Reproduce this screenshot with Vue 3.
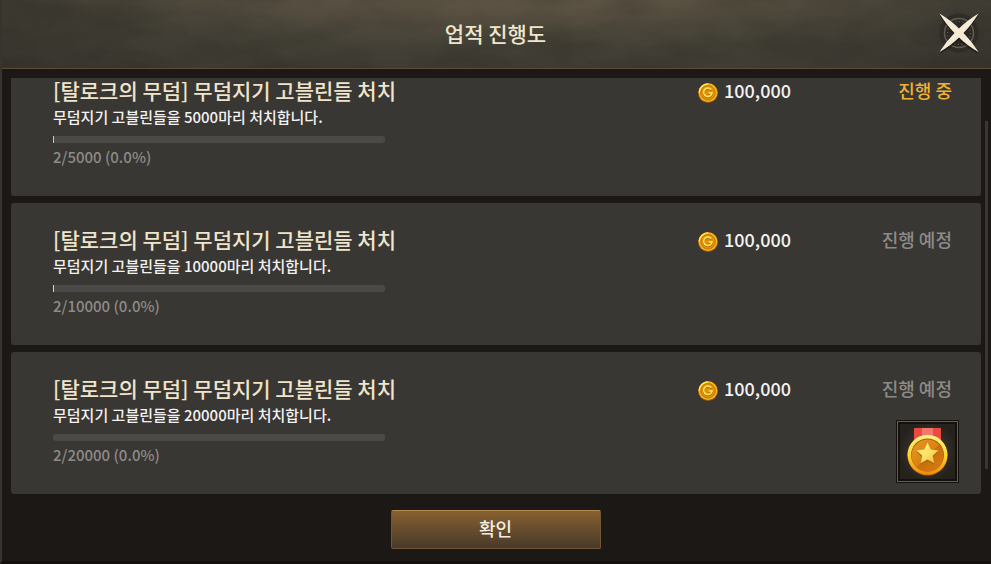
<script setup>
const achievements = [
  { id: 1, title: '[탈로크의 무덤] 무덤지기 고블린들 처치', current: 2, goal: 5000, reward: '100,000', state: '진행 중', active: true, started: true, medal: false },
  { id: 2, title: '[탈로크의 무덤] 무덤지기 고블린들 처치', current: 2, goal: 10000, reward: '100,000', state: '진행 예정', active: false, started: true, medal: false },
  { id: 3, title: '[탈로크의 무덤] 무덤지기 고블린들 처치', current: 2, goal: 20000, reward: '100,000', state: '진행 예정', active: false, started: false, medal: true },
]
const percent = (a) => ((a.current / a.goal) * 100).toFixed(1)
</script>

<template>
  <main class="dialog">
    <header class="header">
      <svg class="texture" aria-hidden="true">
        <filter id="stone" x="0" y="0" width="100%" height="100%">
          <feTurbulence type="fractalNoise" baseFrequency="0.014 0.035" numOctaves="4" seed="8" />
          <feColorMatrix values="0 0 0 0 0  0 0 0 0 0  0 0 0 0 0  1.2 0 0 0 -0.4" />
        </filter>
        <rect width="100%" height="100%" filter="url(#stone)" />
      </svg>
      <h1 class="heading">업적 진행도</h1>
      <button class="close" type="button" aria-label="닫기">
        <svg viewBox="0 0 42 42" width="42" height="42" aria-hidden="true">
          <circle cx="21" cy="21" r="19.5" fill="#2b2a25" opacity=".75" />
          <circle cx="21" cy="21" r="14.5" fill="#2a2823" stroke="#625d50" stroke-width="1.5" />
          <circle cx="21" cy="21" r="11.5" fill="none" stroke="#6b6557" stroke-width="1.2" stroke-dasharray="1 2.6" />
          <path d="M1.500 3.500Q13 10 21 19 29 10 40.500 3.500 33 15 25 23 33 31 40.500 42 29 36 21 28 13 36 1.500 42 9 31 17 23 9 15 1.500 3.500Z" fill="#15130f" opacity=".6" />
          <path d="M1.500 1.500Q13 8.500 21 16.500 29 8.500 40.500 1.500 33.500 13 25.500 21 33.500 29 40.500 40 29 33.500 21 25.500 13 33.500 1.500 40 8.500 29 16.500 21 8.500 13 1.500 1.500Z" fill="#f5ead6" />
        </svg>
      </button>
    </header>

    <div class="body">
      <ul class="list">
        <li v-for="a in achievements" :key="a.id" class="card">
          <div class="info">
            <h2 class="title">{{ a.title }}</h2>
            <p class="desc">무덤지기 고블린들을 {{ a.goal }}마리 처치합니다.</p>
            <div class="bar" role="progressbar" :aria-valuenow="a.current" :aria-valuemax="a.goal" aria-label="진행도">
              <div v-if="a.started" class="fill" :class="{ gold: a.active }" :style="{ width: (a.current / a.goal) * 100 + '%' }"></div>
            </div>
            <p class="count">{{ a.current }}/{{ a.goal }} ({{ percent(a) }}%)</p>
          </div>
          <div class="reward">
            <svg class="coin" viewBox="0 0 20 20" width="20" height="20" aria-hidden="true">
              <circle cx="10" cy="10" r="10" fill="#a9570c" />
              <circle cx="10" cy="9.600" r="9.400" fill="#f5b81c" />
              <path d="M1.200 9.500A8.800 8.800 0 0 1 10 .8" fill="none" stroke="#fff45c" stroke-width="1.300" />
              <circle cx="10" cy="9.800" r="7.300" fill="#e0920e" stroke="#b96a08" stroke-width=".8" />
              <path d="M13.200 7.500A4.200 4.200 0 1 0 14 10.800H10.500" fill="none" stroke="#a85405" stroke-width="1.800" />
              <path d="M13.200 6.800A4.200 4.200 0 1 0 14 10H10.500" fill="none" stroke="#ffe750" stroke-width="1.700" />
            </svg>
            <span>{{ a.reward }}</span>
          </div>
          <div class="side">
            <span class="state" :class="{ active: a.active }">{{ a.state }}</span>
            <div v-if="a.medal" class="medal">
              <svg viewBox="0 0 55 55" width="55" height="55" role="img" aria-label="메달">
                <defs>
                  <linearGradient id="rim" x1="0" y1="0" x2="0" y2="1">
                    <stop offset="0" stop-color="#fff28a" />
                    <stop offset=".5" stop-color="#ffd62e" />
                    <stop offset="1" stop-color="#f08a08" />
                  </linearGradient>
                  <linearGradient id="face" x1="0" y1="0" x2="1" y2="1">
                    <stop offset="0" stop-color="#e79a22" />
                    <stop offset=".5" stop-color="#d98212" />
                    <stop offset=".52" stop-color="#c96f0c" />
                    <stop offset="1" stop-color="#d67d12" />
                  </linearGradient>
                  <linearGradient id="star" x1="0" y1="0" x2="1" y2="1">
                    <stop offset="0" stop-color="#fff27a" />
                    <stop offset=".5" stop-color="#fbe36c" />
                    <stop offset="1" stop-color="#efb52c" />
                  </linearGradient>
                </defs>
                <path d="M14 4H41V20H14Z" fill="#ea4a40" />
                <path d="M22 4H33V20H22Z" fill="#f5766c" />
                <circle cx="27.500" cy="31.500" r="20" fill="#b45a08" />
                <circle cx="27.500" cy="30.800" r="20" fill="url(#rim)" />
                <circle cx="27.500" cy="31" r="16.500" fill="#a95b0a" />
                <circle cx="27.500" cy="31.500" r="16" fill="url(#face)" />
                <path d="M27.500 20 30.800 26.600 38.500 27.600 33 33 34.300 40.500 27.500 37 20.700 40.500 22 33 16.500 27.600 24.200 26.600Z" fill="#a9640c" />
                <path d="M27.500 18.500 30.700 25.600 38.500 26.400 32.700 31.700 34.300 39.300 27.500 35.500 20.700 39.300 22.300 31.700 16.500 26.400 24.300 25.600Z" fill="url(#star)" />
              </svg>
            </div>
          </div>
        </li>
      </ul>
      <div class="rail"><div class="thumb"></div></div>
    </div>

    <footer class="footer">
      <button class="confirm" type="button">확인</button>
    </footer>
  </main>
</template>

<style>
body {
  background: #1b1814;
}
</style>

<style scoped>
.dialog {
  box-sizing: border-box;
  display: flex;
  flex-direction: column;
  height: 100vh;
  border-left: 2px solid #37342d;
  border-bottom: 3px solid #13100d;
  background: #1c1815;
  font-family: "Noto Sans CJK KR", "Noto Sans", sans-serif;
  font-weight: 500;
  overflow: hidden;
}

h1, h2, p, ul {
  margin: 0;
  padding: 0;
  font-weight: inherit;
}

.header {
  position: relative;
  display: grid;
  grid-template-columns: 1fr auto 1fr;
  align-items: center;
  height: 66px;
  flex: none;
  padding: 0 11px 2px 9px;
  border-bottom: 1px solid #5c4c36;
  background:
    radial-gradient(ellipse 50% 70% at 52% 0, rgba(112, 96, 76, 0.5), transparent),
    linear-gradient(90deg, rgba(45, 43, 38, 0.4), transparent 30%, transparent 70%, rgba(45, 43, 38, 0.4)),
    linear-gradient(#4c483c, #3f3d34);
}

.texture {
  position: absolute;
  inset: 0;
  width: 100%;
  height: 100%;
  opacity: 0.2;
}

.heading {
  position: relative;
  grid-column: 2;
  color: #f0e6cc;
  font-size: 21px;
  line-height: 30px;
}

.close {
  position: relative;
  grid-column: 3;
  justify-self: end;
  padding: 0;
  border: 0;
  background: none;
  cursor: pointer;
}

.close svg {
  display: block;
}

.body {
  display: flex;
  flex: 1;
  min-height: 0;
  gap: 4px;
  padding: 9px 3px 0 9px;
}

.list {
  display: flex;
  flex: 1;
  flex-direction: column;
  justify-content: flex-end;
  gap: 7px;
  overflow: hidden;
  list-style: none;
}

.card {
  box-sizing: border-box;
  display: grid;
  flex: none;
  grid-template-columns: 1fr 92px 169px;
  height: 142px;
  padding: 24px 22px 11px 42px;
  border-radius: 3px;
  background: #393733;
}

.title {
  color: #f0e4cb;
  font-size: 21px;
  line-height: 24px;
}

.desc {
  margin-top: 5px;
  color: #f2f2f2;
  font-size: 15px;
  line-height: 20px;
}

.bar {
  width: 332px;
  max-width: 100%;
  height: 7px;
  margin-top: 9px;
  border-radius: 3px;
  background: #4b4a48;
}

.fill {
  min-width: 1px;
  height: 100%;
  background: #d8d3c6;
}

.fill.gold {
  background: #f3c552;
}

.count {
  margin-top: 4px;
  color: #8d8b88;
  font-size: 15px;
  line-height: 20px;
}

.reward {
  display: flex;
  align-items: flex-start;
  gap: 6px;
  color: #f2f2f2;
  font-size: 18px;
  line-height: 24px;
}

.coin {
  flex: none;
  margin-top: 5px;
}

.side {
  display: flex;
  flex-direction: column;
  align-items: flex-end;
  justify-content: space-between;
}

.state {
  padding-right: 7px;
  color: #8d8b88;
  font-size: 18px;
  line-height: 24px;
}

.state.active {
  color: #f0b232;
}

.medal {
  padding: 2px;
  border: 1px solid #6a5d48;
  outline: 1px solid #15120e;
  margin: 1px;
  background: #15120e;
}

.medal svg {
  display: block;
  background: radial-gradient(#4b4435, #25221d 75%);
}

.rail {
  width: 3px;
  padding: 43px 0 25px;
}

.thumb {
  height: 100%;
  background: #393733;
}

.footer {
  display: flex;
  flex: none;
  justify-content: center;
  padding: 16px 2px 12px 0;
}

.confirm {
  width: 210px;
  height: 39px;
  padding: 0 0 4px;
  border: 1px solid #705634;
  border-top-color: #b18a58;
  border-radius: 2px;
  background: linear-gradient(#86602f, #483a2a);
  color: #f3eee4;
  font: inherit;
  font-size: 18px;
  cursor: pointer;
}
</style>
